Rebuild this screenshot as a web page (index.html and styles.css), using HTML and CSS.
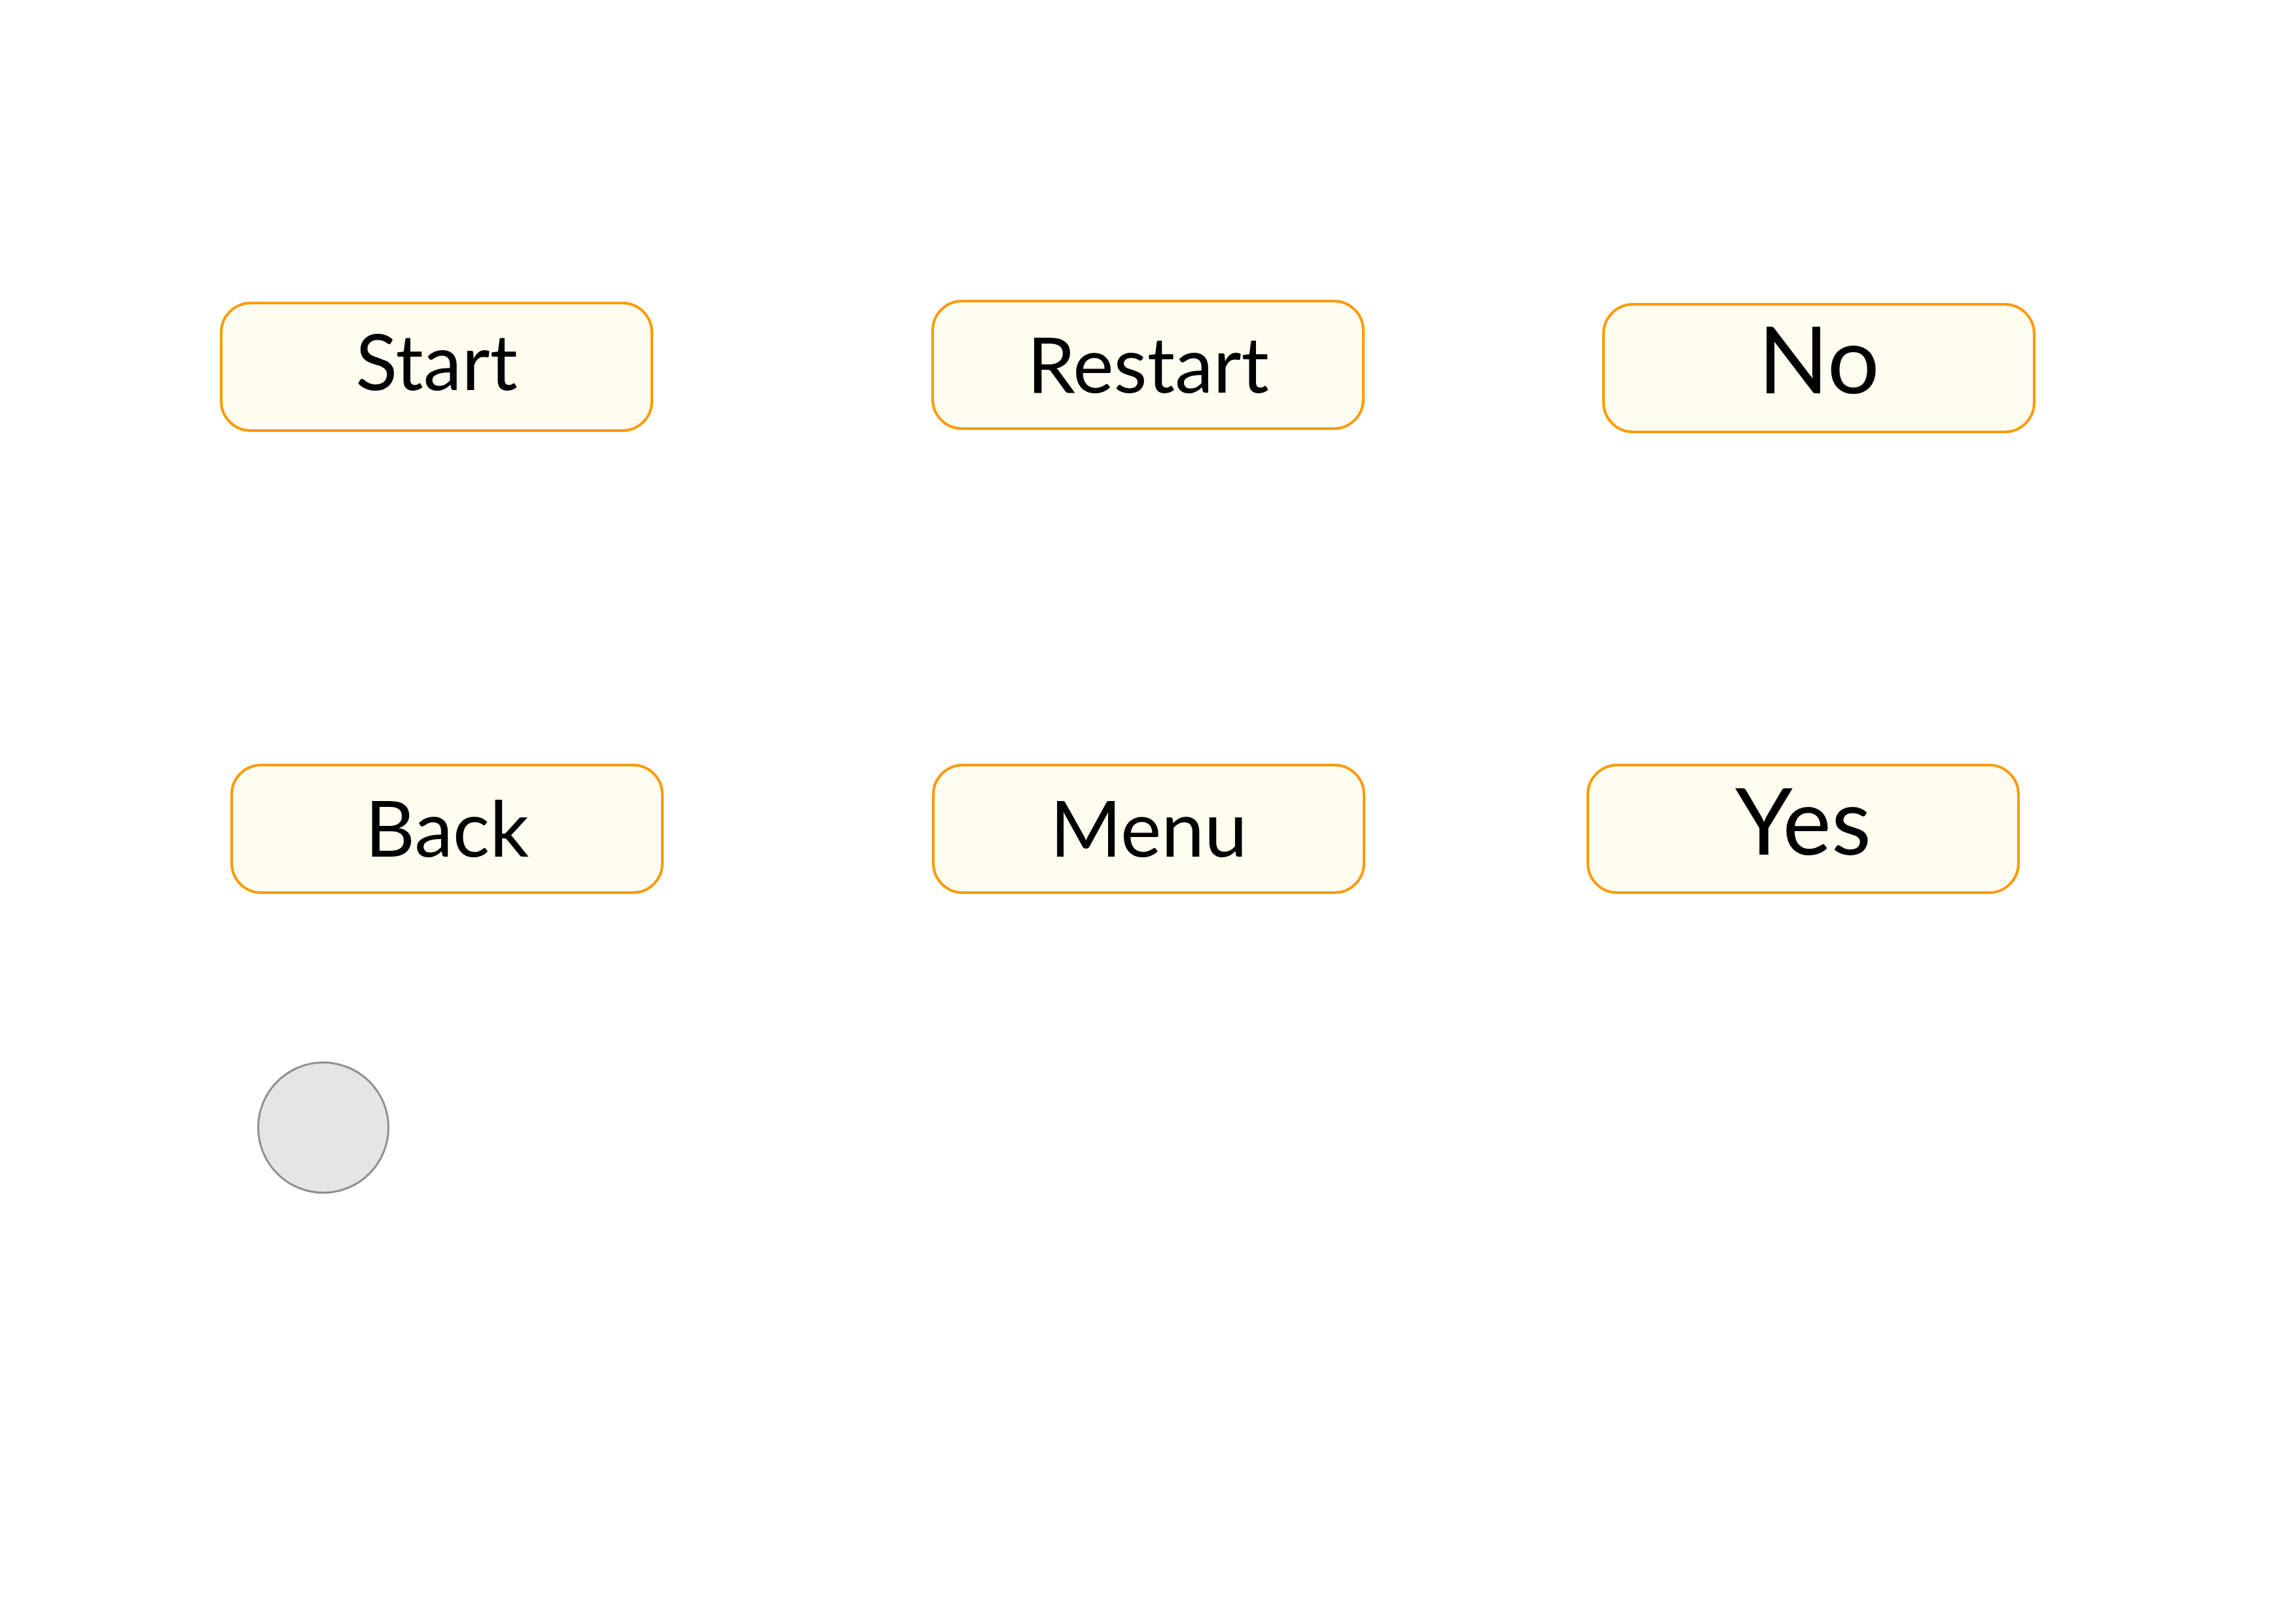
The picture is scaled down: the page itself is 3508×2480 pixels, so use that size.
FILE: index.html
```html
<!DOCTYPE html>
<html lang="en">
<head>
<meta charset="utf-8">
<title>Buttons</title>
<link rel="stylesheet" href="styles.css">
</head>
<body>
<div class="page">
  <div class="row row-top">
    <div class="btn btn-start">Start</div>
    <div class="btn btn-restart">Restart</div>
    <div class="btn btn-big btn-no">No</div>
  </div>
  <div class="row row-bottom">
    <div class="btn btn-back">Back</div>
    <div class="btn btn-menu">Menu</div>
    <div class="btn btn-big btn-yes">Yes</div>
  </div>
  <div class="dot"></div>
</div>
</body>
</html>
```
FILE: styles.css
```css
html, body {
  margin: 0;
  padding: 0;
  background: #ffffff;
}
.page {
  width: 3508px;
  height: 2480px;
  padding-top: 458px;
  box-sizing: border-box;
  font-family: Lato, "Open Sans", sans-serif;
  color: #000;
}
.row {
  display: flex;
  align-items: flex-start;
}
.row-bottom {
  margin-top: 505px;
}
.btn {
  width: 662px;
  height: 199px;
  box-sizing: border-box;
  border: 4px solid #ff9900;
  border-radius: 47px;
  background: #fffdf0;
  display: flex;
  align-items: center;
  justify-content: center;
  font-size: 118px;
  line-height: 1;
  padding-bottom: 6px;
}
.btn-big {
  font-size: 141px;
}
.btn-start {
  margin-left: 336px;
  margin-top: 3px;
  padding-bottom: 20px;
}
.btn-restart {
  margin-left: 425px;
}
.btn-no {
  margin-left: 363px;
  margin-top: 5px;
  padding-bottom: 32px;
}
.btn-back {
  margin-left: 352px;
}
.btn-menu {
  margin-left: 410px;
}
.btn-yes {
  margin-left: 338px;
  padding-bottom: 30px;
}
.dot {
  width: 202px;
  height: 202px;
  box-sizing: border-box;
  margin-top: 256px;
  margin-left: 393px;
  border-radius: 50%;
  border: 3px solid #8f8f8f;
  background: #e5e5e5;
}
```
